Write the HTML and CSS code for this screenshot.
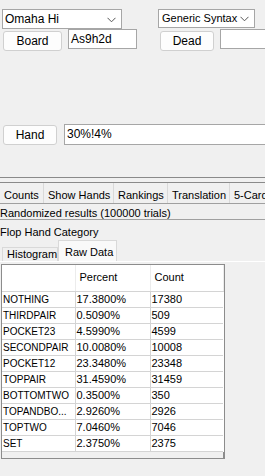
FILE: index.html
```html
<!DOCTYPE html>
<html lang="en">
<head>
  <meta charset="UTF-8" />
  <meta name="viewport" content="width=device-width, initial-scale=1.0" />
  <title>Odds Oracle</title>
  <link rel="stylesheet" href="styles.css">
</head>
<body>

  <div class="row row-games">
    <div class="combo combo-game">Omaha Hi
      <svg class="chev" width="9" height="6" viewBox="0 0 9 6"><path d="M0.5 0.8 L4.5 4.8 L8.5 0.8" fill="none" stroke="#555" stroke-width="1"/></svg>
    </div>
    <div class="combo combo-syntax">Generic Syntax
      <svg class="chev" width="9" height="6" viewBox="0 0 9 6"><path d="M0.5 0.8 L4.5 4.8 L8.5 0.8" fill="none" stroke="#555" stroke-width="1"/></svg>
    </div>
  </div>

  <div class="row row-board">
    <button class="btn btn-board">Board</button>
    <div class="field field-board">As9h2d</div>
    <button class="btn btn-dead">Dead</button>
    <div class="field field-dead"></div>
  </div>

  <div class="row row-hand">
    <button class="btn btn-hand">Hand</button>
    <div class="field field-hand">30%!4%</div>
  </div>

  <div class="sep"></div>

  <div class="tabs">
    <div class="tab t1">Counts</div>
    <div class="tab t2">Show Hands</div>
    <div class="tab t3">Rankings</div>
    <div class="tab t4">Translation</div>
    <div class="tab t5">5-Card</div>
  </div>

  <div class="status">Randomized results (100000 trials)</div>
  <div class="caption">Flop Hand Category</div>

  <div class="subtabs">
    <div class="subtab">Histogram</div>
    <div class="subtab active">Raw Data</div>
  </div>

  <div class="panel">
    <div class="grid">
      <table>
        <colgroup><col class="c1"><col class="c2"><col class="c3"></colgroup>
        <tr class="head"><th></th><th>Percent</th><th>Count</th></tr>
        <tr><td>NOTHING</td><td>17.3800%</td><td>17380</td></tr>
        <tr><td>THIRDPAIR</td><td>0.5090%</td><td>509</td></tr>
        <tr><td>POCKET23</td><td>4.5990%</td><td>4599</td></tr>
        <tr><td>SECONDPAIR</td><td>10.0080%</td><td>10008</td></tr>
        <tr><td>POCKET12</td><td>23.3480%</td><td>23348</td></tr>
        <tr><td>TOPPAIR</td><td>31.4590%</td><td>31459</td></tr>
        <tr><td>BOTTOMTWO</td><td>0.3500%</td><td>350</td></tr>
        <tr><td>TOPANDBO...</td><td>2.9260%</td><td>2926</td></tr>
        <tr><td>TOPTWO</td><td>7.0460%</td><td>7046</td></tr>
        <tr><td>SET</td><td>2.3750%</td><td>2375</td></tr>
      </table>
      <div class="filler"></div>
    </div>
  </div>

</body>
</html>
```

FILE: styles.css
```css
body {
  margin: 0;
  width: 265px;
  height: 476px;
  overflow: hidden;
  background: #f0f0f0;
  font-family: 'Liberation Sans', Arial, sans-serif;
  font-size: 12px;
  color: #000;
}

.row {
  display: flex;
  align-items: flex-start;
  white-space: nowrap;
  overflow: hidden;
}

.row > * {
  flex-shrink: 0;
}

.row-games {
  padding-top: 9px;
}

.combo {
  position: relative;
  box-sizing: border-box;
  height: 20px;
  line-height: 18px;
  padding-left: 2px;
  background: #fff;
  border: 1px solid #a6a6a6;
  font-size: 12px;
}

.combo-game {
  margin-left: 2px;
  width: 120px;
}

.combo-syntax {
  margin-left: 36px;
  width: 97px;
  height: 19px;
  line-height: 17px;
  padding-left: 3px;
  font-size: 11px;
}

.chev {
  position: absolute;
  right: 5px;
  top: 7px;
}

.combo-syntax .chev {
  top: 6px;
}

.btn {
  box-sizing: border-box;
  height: 20px;
  margin-top: 2px;
  padding: 0;
  background: #fdfdfd;
  border: 1px solid #d0d0d0;
  border-radius: 3px;
  font-family: 'Liberation Sans', Arial, sans-serif;
  font-size: 12px;
  color: #000;
}

.field {
  box-sizing: border-box;
  height: 20px;
  line-height: 18px;
  padding-left: 2px;
  background: #fff;
  border: 1px solid #a6a6a6;
  font-size: 12px;
}

.btn-board {
  margin-left: 3px;
  width: 59px;
}

.field-board {
  margin-left: 6px;
  width: 69px;
}

.btn-dead {
  margin-left: 23px;
  width: 54px;
}

.field-dead {
  margin-left: 6px;
  width: 60px;
}

.row-hand {
  margin-top: 73px;
}

.btn-hand {
  margin-left: 3px;
  margin-top: 1px;
  width: 54px;
}

.field-hand {
  margin-left: 7px;
  width: 220px;
  height: 21px;
  line-height: 19px;
}

.sep {
  margin-top: 32px;
  height: 1px;
  background: #8a8a8a;
}

.tabs {
  display: flex;
  box-sizing: border-box;
  margin-top: 4px;
  height: 22px;
  border-top: 1px solid #8a8a8a;
  border-bottom: 1px solid #a0a0a0;
  font-size: 11px;
  white-space: nowrap;
  overflow: hidden;
}

.tab {
  box-sizing: border-box;
  height: 20px;
  line-height: 24px;
  padding-left: 4px;
  border-right: 1px solid #d9d9d9;
  flex-shrink: 0;
}

.t1 { width: 44px; }
.t2 { width: 70px; }
.t3 { width: 54px; }
.t4 { width: 62px; }
.t5 { width: 40px; }

.status {
  box-sizing: border-box;
  height: 16px;
  line-height: 18px;
  font-size: 11px;
  border-bottom: 1px solid #a0a0a0;
  white-space: nowrap;
  overflow: hidden;
}

.caption {
  height: 20px;
  line-height: 24px;
  font-size: 11px;
  overflow: hidden;
}

.subtabs {
  display: flex;
  align-items: flex-end;
  box-sizing: border-box;
  height: 22px;
  padding-left: 2px;
  border-bottom: 1px solid #fff;
  font-size: 11px;
}

.subtab {
  box-sizing: border-box;
  width: 56px;
  height: 14px;
  line-height: 12px;
  padding-left: 4px;
  border: 1px solid #d9d9d9;
  border-bottom: none;
}

.subtab.active {
  width: 59px;
  height: 21px;
  line-height: 22px;
  padding-left: 6px;
  background: #f9f9f9;
}

.panel {
  padding-top: 2px;
  padding-left: 1px;
}

.grid {
  width: 221px;
  border: 1px solid #8c8c8c;
  border-right: 2px solid #8c8c8c;
  background: #f0f0f0;
}

table {
  width: 221px;
  border-collapse: collapse;
  table-layout: fixed;
  background: #fff;
  font-size: 11px;
}

col.c1 { width: 73px; }
col.c2 { width: 75px; }
col.c3 { width: 73px; }

th, td {
  box-sizing: border-box;
  height: 16px;
  padding: 0 0 0 1px;
  border-right: 1px solid #d4d4d4;
  border-bottom: 1px solid #d4d4d4;
  white-space: nowrap;
  overflow: hidden;
  text-align: left;
  font-weight: normal;
  line-height: 15px;
}

td:first-child {
  font-size: 10px;
}

th:last-child, td:last-child { border-right: none; }

tr.head th {
  height: 26px;
  padding-left: 4px;
  border-right: 1px solid #ececec;
  border-bottom: 1px solid #d4d4d4;
}

.filler {
  height: 6px;
}
```
